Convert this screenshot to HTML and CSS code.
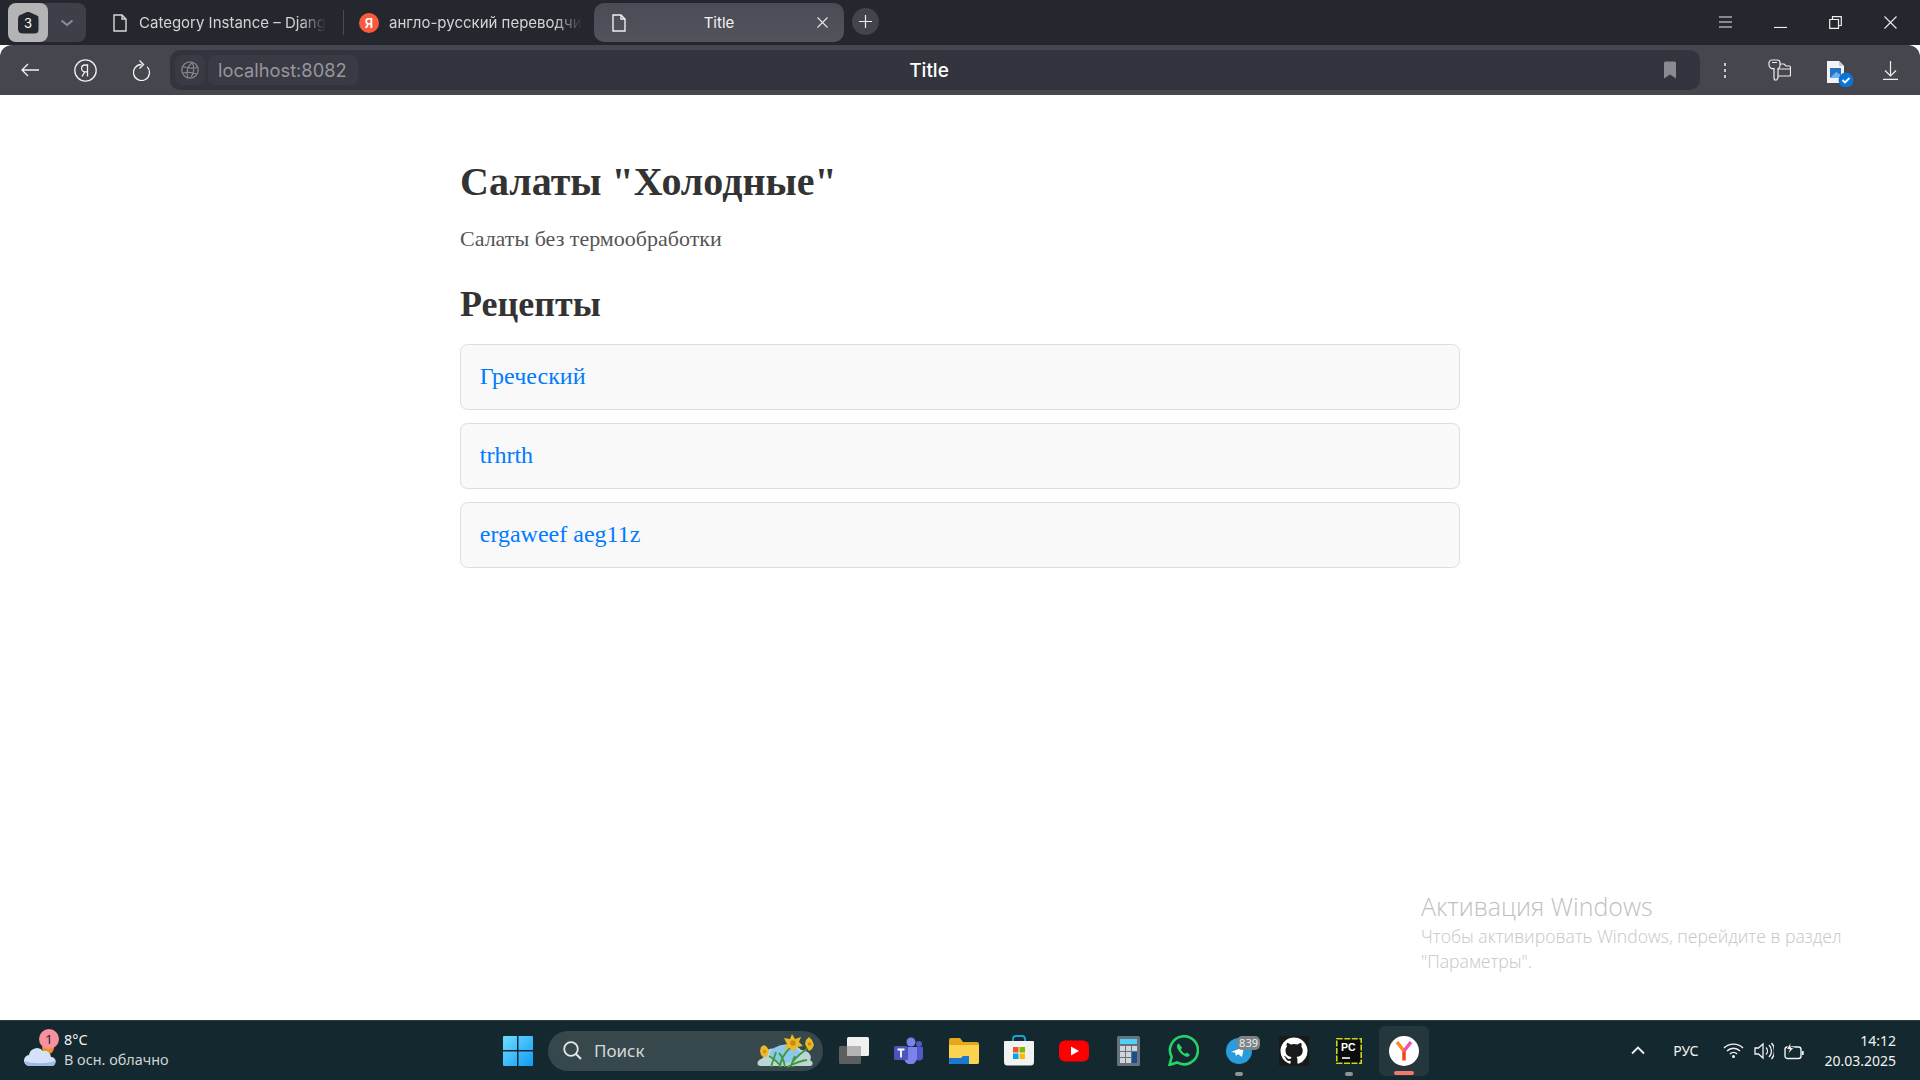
FILE: index.html
```html
<!DOCTYPE html>
<html lang="ru">
<head>
    <meta charset="UTF-8">
    <title>Title</title>
    <link rel="stylesheet" href="styles.css">
</head>
<body>

<div class="tabbar">
    <div class="tab-group">
        <div class="tab-count"><span class="count-badge">3</span></div>
        <div class="tab-chevron">
            <svg width="14" height="8" viewBox="0 0 14 8"><path d="M1.500 1.500 7 6l5.500-4.500" fill="none" stroke="#8d8e95" stroke-width="2"/></svg>
        </div>
    </div>
    <div class="tab tab-first">
        <svg class="page-icon" width="14" height="18" viewBox="0 0 14 18"><path d="M1 1h8l4 4v12H1zM9 1v4h4" fill="none" stroke="#d8d8da" stroke-width="1.400"/></svg>
        <span class="tab-text">Category Instance – Djang</span>
    </div>
    <div class="tab-sep"></div>
    <div class="tab tab-second">
        <span class="ya-dot">Я</span>
        <span class="tab-text">англо-русский переводчи</span>
    </div>
    <div class="tab tab-active">
        <svg class="page-icon" width="14" height="18" viewBox="0 0 14 18"><path d="M1 1h8l4 4v12H1zM9 1v4h4" fill="none" stroke="#f0f0f0" stroke-width="1.400"/></svg>
        <span class="tab-title">Title</span>
        <svg width="11" height="11" viewBox="0 0 11 11"><path d="m.5.5 10 10m0-10-10 10" stroke="#e8e8ea" stroke-width="1.100"/></svg>
    </div>
    <div class="new-tab">
        <svg width="13" height="13" viewBox="0 0 13 13"><path d="M6.500 0v13M0 6.500h13" stroke="#f0f0f0" stroke-width="1.200"/></svg>
    </div>
    <div class="win-controls">
        <svg width="13" height="12" viewBox="0 0 13 12"><path d="M0 1h13M0 6h13M0 11h13" stroke="#eee" stroke-width="1.100"/></svg>
        <svg width="13" height="12" viewBox="0 0 13 12"><path d="M0 11.500h13" stroke="#eee" stroke-width="1.200"/></svg>
        <svg width="13" height="13" viewBox="0 0 13 13"><path d="M.7 3.500h8.800v8.800H.7zM3.500 3.500V.7h8.800v8.800H9.500" fill="none" stroke="#eee" stroke-width="1.200"/></svg>
        <svg width="13" height="13" viewBox="0 0 13 13"><path d="m.5.5 12 12m0-12-12 12" stroke="#eee" stroke-width="1.100"/></svg>
    </div>
</div>

<div class="toolbar">
    <div class="nav-buttons">
        <svg width="18" height="14" viewBox="0 0 18 14"><path d="M7 1 1 7l6 6M1 7h17" fill="none" stroke="#f2f2f2" stroke-width="1.300"/></svg>
        <svg width="23" height="23" viewBox="0 0 23 23"><circle cx="11.500" cy="11.500" r="10.700" fill="none" stroke="#f2f2f2" stroke-width="1.300"/><path d="M13.500 17.500V6h-2.500a3.300 3.300 0 0 0 0 6.800h2.500M10.800 12.800 8 17.500" fill="none" stroke="#f2f2f2" stroke-width="1.300"/></svg>
        <svg width="18" height="21" viewBox="0 0 18 21"><path d="M14.200 6.900A8 8 0 1 1 8.500 4.500M6.500.5l4 4-4 4" fill="none" stroke="#f2f2f2" stroke-width="1.300"/></svg>
    </div>
    <div class="address">
        <div class="globe-box">
            <svg width="18" height="18" viewBox="0 0 18 18"><g fill="none" stroke="#85868d" stroke-width="1.200"><circle cx="9" cy="9" r="8.200"/><path d="M2 5.500c5 2 9 2 14.500 1M1.500 12c5-1 10-1 14 1M11.500 1.500C6 5 5 12 7 16.500M11 1.500c2.500 4 2.500 10-1 15"/></g></svg>
        </div>
        <div class="url">localhost:8082</div>
        <div class="page-title">Title</div>
        <svg class="bookmark" width="14" height="18" viewBox="0 0 14 18"><path d="M1 2a1.500 1.500 0 0 1 1.500-1.500h9A1.500 1.500 0 0 1 13 2v15.500l-6-4-6 4z" fill="#8a8b91"/></svg>
    </div>
    <div class="tool-buttons">
        <svg width="4" height="15" viewBox="0 0 4 15"><path d="M2 0v3M2 6v3M2 12v3" stroke="#c9c9cc" stroke-width="2"/></svg>
        <svg width="23" height="22" viewBox="0 0 23 22"><g fill="none" stroke="#eee" stroke-width="1.200"><path d="M4 1h5a3 3 0 0 1 3 3v3a3 3 0 0 1-2 2.500V19l-1.500 2h-2L6 19V9.500A4 4 0 0 1 1 6V4a3 3 0 0 1 3-3z"/><path d="M4 3.500h5M12 5h4l2 2h3a1.500 1.500 0 0 1 1.500 1.500V16a1 1 0 0 1-1 1H10M10 10h12.500"/></g></svg>
        <svg class="doc-icon" width="28" height="28" viewBox="0 0 28 28"><path d="M1 2h12l5 5v17H1z" fill="#f2f3f5"/><path d="M13 2v5h5z" fill="#c9ccd2"/><rect x="4" y="9" width="11" height="10" fill="#2b6fc7"/><path d="m4 19 6-6 5 3v3z" fill="#66b6ee"/><circle cx="20" cy="21" r="7.500" fill="#0c74d6"/><path d="m16.500 21 2.500 2.500 4.500-4.500" fill="none" stroke="#fff" stroke-width="1.800"/></svg>
        <svg width="15" height="19" viewBox="0 0 15 19"><path d="M7.500 0v15M2 9.500l5.500 5.500L13 9.500M0 18.300h15" fill="none" stroke="#eee" stroke-width="1.200"/></svg>
    </div>
</div>

<main class="page">
    <div class="container">
        <h1>Салаты "Холодные"</h1>
        <p class="lead">Салаты без термообработки</p>
        <h2>Рецепты</h2>
        <ul class="recipes">
            <li class="recipe"><a href="#">Греческий</a></li>
            <li class="recipe"><a href="#">trhrth</a></li>
            <li class="recipe"><a href="#">ergaweef aeg11z</a></li>
        </ul>
    </div>
    <div class="activation">
        <div class="activation-title">Активация Windows</div>
        <div class="activation-text">Чтобы активировать Windows, перейдите в раздел<br>"Параметры".</div>
    </div>
</main>

<footer class="taskbar">
    <div class="weather">
        <div class="weather-icon">
            <svg width="32" height="36" viewBox="0 0 32 36"><circle cx="24" cy="15" r="6" fill="#f58a1f"/><path d="M6 33a5.500 5.500 0 0 1-1-11 8 8 0 0 1 14-4 6.500 6.500 0 0 1 8 6 4.500 4.500 0 0 1 .5 9z" fill="#d3e2f6"/><path d="M1 28c6 3 22 3 30 0 .5 3-1 5-3 5H6c-2 0-5-2-5-5z" fill="#9dbbe9"/></svg>
            <span class="weather-badge">1</span>
        </div>
        <div class="weather-text">
            <div class="temp">8°C</div>
            <div class="cond">В осн. облачно</div>
        </div>
    </div>

    <div class="task-center">
        <svg class="win-logo" width="30" height="30" viewBox="0 0 30 30">
            <defs><linearGradient id="winGrad" x1="0" y1="0" x2="1" y2="1"><stop offset="0" stop-color="#6fdcff"/><stop offset="1" stop-color="#0f9cf5"/></linearGradient></defs>
            <path d="M1 0h13v14H0V1a1 1 0 0 1 1-1zM15.500 0H29a1 1 0 0 1 1 1v13H15.500zM0 15.500h14V30H1a1 1 0 0 1-1-1zM15.500 15.500H30V29a1 1 0 0 1-1 1H15.500z" fill="url(#winGrad)"/>
        </svg>
        <div class="search">
            <svg width="19" height="19" viewBox="0 0 19 19"><circle cx="8" cy="8" r="6.800" fill="none" stroke="#e4e8e8" stroke-width="1.800"/><path d="m13 13 5 5" stroke="#e4e8e8" stroke-width="2"/></svg>
            <span class="search-text">Поиск</span>
            <svg class="search-flowers" width="58" height="34" viewBox="0 0 58 34">
                <path d="M1 31c-2-4 3-6 5-7 0-7 7-11 12-9 5-6 20-6 26 1 7 0 12 6 9 10 4 2 3 6 0 6H4c-2 0-3-1-3-1z" fill="#bcd6d6"/>
                <ellipse cx="28" cy="20" rx="15" ry="9" fill="#8cc8ec"/>
                <path d="M14 33c2-7 4-11 5-15M23 33c0-6 4-14 11-20M33 33c2-6 8-12 17-18M24 33c-3-5-7-8-12-11M30 33c6-3 12-6 20-7M28 33c-1-6-2-10-6-14M36 33c-1-4 0-8 2-11" fill="none" stroke="#3f9a3a" stroke-width="1.800"/>
                <g fill="#eab928">
                    <polygon points="35,0 38,5 44,3 42,8 46,12 40,13 37,18 33,14 27,15 30,10 27,4 33,5"/>
                    <polygon points="52,3 55,6 57,11 55,15 52,17 50,14 48,10 49,6"/>
                    <polygon points="7,11 10,13 12,17 10,22 7,24 4,21 3,17 4,13"/>
                </g>
                <g fill="#c98b14"><circle cx="36" cy="9" r="2.800"/><circle cx="52.500" cy="10" r="1.800"/><circle cx="7.500" cy="17.500" r="1.600"/></g>
            </svg>
        </div>
        <div class="task-icons">
            <div class="task-icon">
                <svg width="30" height="27" viewBox="0 0 30 27"><rect x="0" y="9" width="22" height="18" rx="1.500" fill="#5c5f60"/><rect x="8" y="0" width="22" height="19" rx="1.500" fill="#f0f0f0"/><rect x="8" y="9" width="14" height="10" fill="#b3b4b4"/></svg>
            </div>
            <div class="task-icon">
                <svg width="30" height="27" viewBox="0 0 30 27"><circle cx="17" cy="5" r="4.500" fill="#7b83eb"/><circle cx="25" cy="7" r="3" fill="#5059c9"/><path d="M20 10h9v9a4 4 0 0 1-8 1z" fill="#5059c9"/><path d="M9 10h14v11a6.500 6.500 0 0 1-13 0z" fill="#7b83eb"/><rect x="0" y="9" width="14" height="14" rx="1.500" fill="#4b53bc"/><path d="M3.500 12.500h7M7 12.500v8" stroke="#fff" stroke-width="1.800"/></svg>
            </div>
            <div class="task-icon">
                <svg width="30" height="26" viewBox="0 0 30 26"><path d="M0 2a2 2 0 0 1 2-2h9l3 4h14a2 2 0 0 1 2 2v18a2 2 0 0 1-2 2H2a2 2 0 0 1-2-2z" fill="#e3a81c"/><path d="M0 7h30v17a2 2 0 0 1-2 2H2a2 2 0 0 1-2-2z" fill="#fcd34f"/><path d="M0 20h12l2-2h6v8H2a2 2 0 0 1-2-2z" fill="#1978cf"/></svg>
            </div>
            <div class="task-icon">
                <svg width="30" height="31" viewBox="0 0 30 31"><path d="M9 7V4a3 3 0 0 1 3-3h6a3 3 0 0 1 3 3v3" fill="none" stroke="#1aa3d6" stroke-width="1.800"/><path d="M1 6h28a1 1 0 0 1 1 1v20a3.500 3.500 0 0 1-3.500 3.500h-23A3.500 3.500 0 0 1 0 27V7a1 1 0 0 1 1-1z" fill="#f2f2f2"/><rect x="9" y="12" width="5.500" height="5.500" fill="#e8562a"/><rect x="15.500" y="12" width="5.500" height="5.500" fill="#7fba00"/><rect x="9" y="18.500" width="5.500" height="5.500" fill="#00a4ef"/><rect x="15.500" y="18.500" width="5.500" height="5.500" fill="#ffb900"/></svg>
            </div>
            <div class="task-icon">
                <svg width="30" height="22" viewBox="0 0 30 22"><rect width="30" height="21" y=".5" rx="6" fill="#f00"/><path d="m12 6.500 8 4.500-8 4.500z" fill="#fff"/></svg>
            </div>
            <div class="task-icon">
                <svg width="24" height="30" viewBox="0 0 24 30"><rect width="23" height="30" rx="1.500" fill="#68727f"/><rect x="3" y="3" width="17" height="5" fill="#4fd0f5"/><g fill="#d0d5da"><rect x="3" y="10" width="5" height="5"/><rect x="9" y="10" width="5" height="5"/><rect x="15" y="10" width="5" height="5"/><rect x="3" y="16" width="5" height="5"/><rect x="9" y="16" width="5" height="5"/><rect x="3" y="22" width="5" height="5"/><rect x="9" y="22" width="5" height="5"/></g><rect x="15" y="16" width="5" height="11" fill="#17508c"/></svg>
            </div>
            <div class="task-icon">
                <svg width="31" height="31" viewBox="0 0 31 31"><path d="M1.500 30 3.700 22A14 14 0 1 1 9 27.400z" fill="none" stroke="#25d366" stroke-width="2.600"/><path d="M10.700 8.500c-1.200.4-2 1.800-1.800 3.300.4 3.600 5.700 9.300 9.700 9.900 1.600.2 3-.7 3.400-2l-3.300-2.200-1.600 1.200c-1.700-.7-3.500-2.600-4.200-4.300l1.200-1.600z" fill="#25d366"/></svg>
            </div>
            <div class="task-icon has-dot">
                <svg width="26" height="26" viewBox="0 0 26 26"><circle cx="13" cy="13" r="13" fill="#2a9bdc"/><path d="m5 14 13-5-2 10-4-3-2 2-1-3.500z" fill="#fff"/></svg>
                <span class="tg-count">839</span>
            </div>
            <div class="task-icon">
                <svg width="30" height="30" viewBox="0 0 30 30"><rect width="30" height="30" fill="#1b1a1b"/><path d="M15 1.500a13.500 13.500 0 0 0-4.300 26.300c.7.100.9-.3.900-.7v-2.300c-3.700.8-4.500-1.800-4.500-1.800-.6-1.500-1.500-2-1.500-2-1.200-.8.100-.8.100-.8 1.400.1 2.100 1.400 2.100 1.400 1.200 2.100 3.200 1.500 3.900 1.100.1-.9.500-1.500.9-1.800-3-.3-6.100-1.500-6.100-6.600 0-1.500.5-2.700 1.400-3.600-.1-.3-.6-1.700.1-3.600 0 0 1.100-.4 3.700 1.400a13 13 0 0 1 6.800 0c2.600-1.800 3.700-1.400 3.700-1.400.7 1.900.3 3.300.1 3.600.9 1 1.400 2.200 1.400 3.600 0 5.200-3.200 6.300-6.200 6.600.5.400.9 1.200.9 2.500v3.700c0 .4.200.8.900.7A13.500 13.500 0 0 0 15 1.500z" fill="#fff"/></svg>
            </div>
            <div class="task-icon has-dot">
                <svg width="26" height="26" viewBox="0 0 26 26"><rect x=".8" y=".8" width="24.400" height="24.400" fill="#0b0b0b" stroke="#c9d816" stroke-width="1.600" stroke-dasharray="6 1.500"/><path d="M6 20h8" stroke="#fff" stroke-width="1.600"/><text class="pc-label" x="5" y="13">PC</text></svg>
            </div>
            <div class="task-icon task-icon-active">
                <svg width="30" height="30" viewBox="0 0 30 30"><circle cx="15" cy="15" r="15" fill="#fff"/><path d="M15 24.500V14.500" stroke="#fc3f1d" stroke-width="3.500"/><path d="M8 6l7 9" stroke="#fb8b24" stroke-width="3.500"/><path d="M22 6l-7 9" stroke="#f14fb1" stroke-width="3.500"/></svg>
                <span class="active-line"></span>
            </div>
        </div>
    </div>

    <div class="tray">
        <svg class="tray-chevron" width="14" height="9" viewBox="0 0 14 9"><path d="m1 7.500 6-6 6 6" fill="none" stroke="#f2f2f2" stroke-width="1.800"/></svg>
        <span class="lang">РУС</span>
        <svg width="21" height="15" viewBox="0 0 21 15"><g fill="none" stroke="#f2f2f2" stroke-width="1.400"><path d="M1 5a13.500 13.500 0 0 1 19 0M4 8a9 9 0 0 1 13 0M7 11a4.500 4.500 0 0 1 7 0"/></g><circle cx="10.500" cy="13.500" r="1.500" fill="#f2f2f2"/></svg>
        <svg width="20" height="18" viewBox="0 0 20 18"><g fill="none" stroke="#f2f2f2" stroke-width="1.300"><path d="M1 6h3.500L9 2v14l-4.500-4H1zM12 5.500a5 5 0 0 1 0 7M15 3a8.500 8.500 0 0 1 0 12M17.500 1a12 12 0 0 1 0 16"/></g></svg>
        <svg width="20" height="18" viewBox="0 0 20 18"><rect x="1" y="5" width="16" height="11.500" rx="2.500" fill="none" stroke="#f2f2f2" stroke-width="1.400"/><path d="M18.800 9v4" stroke="#f2f2f2" stroke-width="1.800"/><path d="M6.500.5 2.500 7.500h3l-2 5.500 6.500-7.500H7z" fill="#f2f2f2" stroke="#14292f" stroke-width=".8"/></svg>
        <div class="clock">
            <div>14:12</div>
            <div>20.03.2025</div>
        </div>
    </div>
</footer>

</body>
</html>
```

FILE: styles.css
```css
* {
    box-sizing: border-box;
}

html, body {
    margin: 0;
    height: 100%;
}

body {
    display: flex;
    flex-direction: column;
    height: 1080px;
    overflow: hidden;
    background: #fff;
    font-family: "Liberation Serif", "Times New Roman", serif;
}

svg {
    flex: none;
}

/* tabs */
.tabbar {
    display: flex;
    align-items: flex-start;
    height: 45px;
    padding: 3px 0 0 8px;
    background: #25272f;
    font-family: Inter, "Noto Sans", sans-serif;
    font-size: 15px;
    color: #d4d4d6;
}

.tab-group {
    display: flex;
    width: 78px;
    height: 39px;
    background: #3e3f48;
    border-radius: 8px;
}

.tab-count {
    display: flex;
    align-items: center;
    justify-content: center;
    width: 40px;
    background: #b4b4b6;
    border-radius: 8px;
}

.count-badge {
    display: flex;
    align-items: center;
    justify-content: center;
    width: 21px;
    height: 22px;
    background: #25272f;
    border-radius: 7px 7px 5px 5px;
    clip-path: polygon(50% 0, 100% 22%, 100% 100%, 0 100%, 0 22%);
    color: #fff;
    font-size: 13px;
}

.tab-chevron {
    display: flex;
    align-items: center;
    justify-content: center;
    flex: 1;
}

.tab {
    display: flex;
    align-items: center;
    height: 39px;
}

.tab-first {
    width: 257px;
    padding-left: 27px;
    gap: 12px;
}

.tab-second {
    width: 250px;
    padding-left: 15px;
    gap: 10px;
}

.tab-sep {
    width: 1px;
    height: 25px;
    margin-top: 7px;
    background: #4a4b53;
}

.tab-text {
    white-space: nowrap;
    -webkit-mask-image: linear-gradient(to right, #000 86%, transparent 100%);
    mask-image: linear-gradient(to right, #000 86%, transparent 100%);
}

.ya-dot {
    display: flex;
    align-items: center;
    justify-content: center;
    flex: none;
    width: 20px;
    height: 20px;
    border-radius: 50%;
    background: #fc5a3c;
    color: #fff;
    font-size: 13px;
    font-weight: 600;
}

.tab-active {
    width: 250px;
    padding: 0 16px 0 18px;
    background: linear-gradient(#4a4b55, #52535d);
    border-radius: 10px;
    color: #f4f4f4;
}

.tab-title {
    flex: 1;
    margin-right: 5px;
    text-align: center;
}

.new-tab {
    display: flex;
    align-items: center;
    justify-content: center;
    width: 27px;
    height: 27px;
    margin: 5px 0 0 8px;
    border-radius: 50%;
    background: #43444d;
}

.win-controls {
    display: flex;
    gap: 42px;
    align-items: center;
    height: 38px;
    margin-left: auto;
    padding-right: 23px;
}

/* toolbar */
.toolbar {
    display: flex;
    align-items: center;
    height: 50px;
    background: #46464f;
    border-radius: 12px 12px 0 0;
}

.nav-buttons {
    display: flex;
    align-items: center;
    gap: 35.500px;
    width: 170px;
    padding-left: 20.500px;
}

.address {
    position: relative;
    display: flex;
    align-items: center;
    width: 1530px;
    height: 40px;
    padding: 0 5px;
    background: #33343d;
    border-radius: 10px;
    font-family: Inter, "Noto Sans", sans-serif;
}

.globe-box {
    display: flex;
    align-items: center;
    justify-content: center;
    width: 30px;
    height: 30px;
    background: #393a43;
    border-radius: 7px;
}

.url {
    display: flex;
    align-items: center;
    width: 150px;
    height: 30px;
    margin-left: 3px;
    padding-left: 10px;
    background: #393a43;
    border-radius: 7px;
    color: #96979d;
    font-size: 18.300px;
}

.page-title {
    position: absolute;
    left: 0;
    width: 1518px;
    text-align: center;
    color: #fff;
    font-size: 19px;
    font-weight: 500;
}

.bookmark {
    margin-left: auto;
    margin-right: 18px;
}

.tool-buttons {
    display: flex;
    align-items: center;
    flex: 1;
    padding-left: 23px;
}

.tool-buttons svg:nth-child(2) {
    margin-left: 41px;
}

.doc-icon {
    margin-left: 35px;
    margin-top: 5px;
}

.tool-buttons svg:nth-child(4) {
    margin-left: 29px;
}

/* page content */
.page {
    position: relative;
    flex: 1;
    padding-top: 1px;
}

.container {
    width: 1000px;
    margin: 0 auto;
    color: #333;
}

h1 {
    margin: 63px 0 0;
    font-size: 40px;
    line-height: 46px;
}

.lead {
    margin: 21px 0 0;
    color: #555;
    font-size: 22px;
    line-height: 25px;
}

h2 {
    margin: 32px 0 0;
    font-size: 36px;
    line-height: 42px;
}

.recipes {
    display: flex;
    flex-direction: column;
    gap: 12.750px;
    margin: 18.500px 0 0;
    padding: 0;
    list-style: none;
}

.recipe {
    height: 66.250px;
    padding: 18.750px;
    background: #f9f9f9;
    border: 1.250px solid #ddd;
    border-radius: 7.500px;
    font-size: 24px;
    line-height: 27px;
}

.recipe a {
    color: #007bff;
    text-decoration: none;
}

.activation {
    position: absolute;
    left: 1421px;
    top: 794px;
    font-family: "Open Sans", "Noto Sans", sans-serif;
    font-weight: 300;
    color: #bfbfbf;
}

.activation-title {
    margin-bottom: 1px;
    font-size: 25px;
    line-height: 34px;
}

.activation-text {
    font-size: 17.600px;
    line-height: 25px;
    color: #c6c6c6;
}

/* taskbar */
.taskbar {
    position: relative;
    display: flex;
    align-items: center;
    height: 60px;
    background: #14292f;
    border-top: 1px solid #2c3f45;
    font-family: "Noto Sans", "Open Sans", sans-serif;
    color: #f2f2f2;
}

.weather {
    display: flex;
    align-items: center;
    gap: 8px;
    width: 503px;
    padding-left: 24px;
}

.weather-icon {
    position: relative;
    width: 32px;
    height: 36px;
}

.weather-badge {
    position: absolute;
    top: -4px;
    right: -3px;
    width: 20px;
    height: 20px;
    border-radius: 50%;
    background: #f7919f;
    color: #222;
    font-size: 13px;
    line-height: 20px;
    text-align: center;
}

.weather-text {
    padding-bottom: 2px;
}

.temp {
    font-size: 14.400px;
    line-height: 20px;
}

.cond {
    font-size: 14.400px;
    line-height: 20px;
    color: #cfd4d5;
}

.task-center {
    display: flex;
    align-items: center;
}

.search {
    display: flex;
    align-items: center;
    width: 275px;
    height: 40px;
    margin-left: 15px;
    padding: 0 8px 0 15px;
    background: #37484d;
    border-radius: 20px;
}

.search-text {
    margin-left: 12px;
    font-size: 17px;
    color: #d5d9da;
}

.search-flowers {
    margin-left: auto;
}

.task-icons {
    display: flex;
    align-items: center;
    margin-left: 3px;
}

.task-icon {
    position: relative;
    display: flex;
    align-items: center;
    justify-content: center;
    width: 55px;
    height: 50px;
}

.has-dot::after {
    content: "";
    position: absolute;
    bottom: 0;
    left: 50%;
    width: 8px;
    height: 4px;
    margin-left: -4px;
    background: #8a9599;
    border-radius: 2px;
}

.tg-count {
    position: absolute;
    top: 10px;
    right: 6px;
    padding: 0 2px;
    background: #7d8487;
    border-radius: 5px;
    color: #eee;
    font-size: 11px;
    line-height: 14px;
}

.pc-label {
    fill: #fff;
    font-family: "Liberation Sans", sans-serif;
    font-size: 10.500px;
    font-weight: 700;
}

.task-icon-active {
    width: 50px;
    margin-left: 3px;
    background: #24373d;
    border-radius: 6px;
}

.active-line {
    position: absolute;
    bottom: 1px;
    left: 15px;
    width: 20px;
    height: 4px;
    background: #f0796a;
    border-radius: 2px;
}

.tray {
    display: flex;
    align-items: center;
    margin-left: auto;
    padding-right: 24px;
    gap: 10px;
}

.tray-chevron {
    margin-right: 18px;
}

.lang {
    margin-right: 14.500px;
    font-size: 14px;
}

.clock {
    margin-left: 10.500px;
    font-size: 14px;
    line-height: 20px;
    text-align: right;
}
```
